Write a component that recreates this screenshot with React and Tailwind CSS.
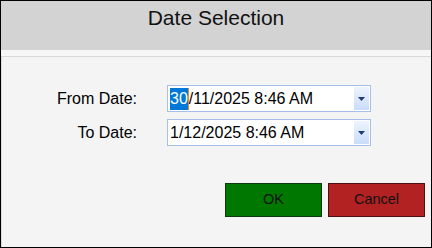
import React from 'react';

function DateField({ value, selected }) {
  // split the selected part off so it can get the highlight
  const rest = selected ? value.slice(selected.length) : value;
  return (
    <div className="flex h-[27px] w-[204px] items-stretch border border-[#a5bfe9] bg-white">
      <div className="flex flex-1 items-center pl-[2px] text-[16px] leading-[22px] text-black">
        {selected && (
          <span className="bg-[#0078d7] text-white">{selected}</span>
        )}
        {selected && <span className="h-[22px] w-px bg-[#f08a24]" />}
        <span>{rest}</span>
      </div>
      <div className="my-px mr-px flex w-[15px] items-center justify-center bg-gradient-to-b from-[#eef4fd] to-[#c9dcf9]">
        <svg width="7" height="4" viewBox="0 0 7 4">
          <path d="M0 0h7L3.5 4z" fill="#1c3b73" />
        </svg>
      </div>
    </div>
  );
}

export default function App() {
  return (
    <div
      className="flex h-[248px] w-[432px] flex-col border border-black bg-[#f4f4f4]"
      style={{ fontFamily: '"Liberation Sans", Arial, sans-serif' }}
    >
      <div className="h-[49px] bg-[#d3d3d3] pt-[5px] text-center text-[21px] leading-[24px] text-[#111]">
        Date Selection
      </div>
      <div className="h-[7px] border-b border-[#d9d9d9] bg-[#f6f6f6]" />

      <div className="flex flex-1 flex-col border-l border-[#dcdcdc] pt-[28px]">
        <div className="grid grid-cols-[135px_204px] gap-x-[30px] gap-y-[7px]">
          <div className="text-right text-[16px] leading-[27px] text-black">From Date:</div>
          <DateField value="30/11/2025 8:46 AM" selected="30" />
          <div className="text-right text-[16px] leading-[27px] text-black">To Date:</div>
          <DateField value="1/12/2025 8:46 AM" />
        </div>

        <div className="mt-[37px] flex justify-end gap-[6px] pr-[6px]">
          <button className="h-[34px] w-[97px] border border-[#0b3b0b] bg-[#007800] text-[14.5px] text-[#111]">
            OK
          </button>
          <button className="h-[34px] w-[97px] border border-[#4a1212] bg-[#b22222] text-[14.5px] text-[#111]">
            Cancel
          </button>
        </div>
      </div>
    </div>
  );
}
